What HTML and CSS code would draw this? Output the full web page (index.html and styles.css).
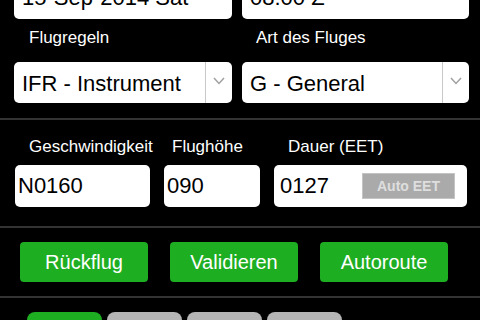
FILE: index.html
```html
<!DOCTYPE html>
<html>
  <head>
    <title>Flugplan</title>
    <meta charset="utf-8" />
    <meta name="viewport" content="width=device-width" />
    <link rel="stylesheet" href="styles.css">
  </head>

  <body>
    <div id="page">
      <div class="section" id="general_section">
        <div class="field_grid">
          <input class="text_input top_input" type="text" value="15-Sep-2014 Sat" />
          <input class="text_input top_input" type="text" value="08:00 Z" />

          <div class="field_label">Flugregeln</div>
          <div class="field_label">Art des Fluges</div>

          <div class="select_box">
            <span class="select_text">IFR - Instrument</span>
            <span class="select_arrow">
              <svg width="12" height="8" viewBox="0 0 12 8">
                <path d="M1 1 L6 6.5 L11 1" fill="none" stroke="#a0a0a0" stroke-width="1.5" />
              </svg>
            </span>
          </div>
          <div class="select_box">
            <span class="select_text">G - General</span>
            <span class="select_arrow">
              <svg width="12" height="8" viewBox="0 0 12 8">
                <path d="M1 1 L6 6.5 L11 1" fill="none" stroke="#a0a0a0" stroke-width="1.5" />
              </svg>
            </span>
          </div>
        </div>
      </div>

      <div class="section" id="speed_section">
        <div class="speed_grid">
          <div class="field_label" id="speed_label">Geschwindigkeit</div>
          <div class="field_label" id="level_label">Flughöhe</div>
          <div class="field_label" id="eet_label">Dauer (EET)</div>

          <input class="text_input small_input" id="speed_input" type="text" value="N0160" />
          <input class="text_input small_input" id="level_input" type="text" value="090" />
          <div class="eet_box">
            <span class="eet_value">0127</span>
            <input class="auto_button" type="button" value="Auto EET" />
          </div>
        </div>
      </div>

      <div class="section" id="action_section">
        <input class="button" type="button" value="Rückflug" />
        <input class="button" type="button" value="Validieren" />
        <input class="button" type="button" value="Autoroute" />
      </div>

      <div class="section" id="tab_section">
        <div class="tab tab_active"></div>
        <div class="tab"></div>
        <div class="tab"></div>
        <div class="tab"></div>
      </div>
    </div>
  </body>
</html>
```

FILE: styles.css
```css
* {
  margin: 0;
  padding: 0;
}

input {
  margin: 0;
  padding: 0;
  appearance: none;
  -webkit-appearance: none;
  -moz-appearance: none;
}

html,
body {
  background-color: black;
  overflow: hidden;
}

body {
  color: white;
  font-family: "Liberation Sans", Arial, Helvetica, sans-serif;
  font-size: 17px;
}

#page {
  margin-top: -23px;
}

.section {
  border-top: 2px solid #333333;
}

#general_section {
  border-top: none;
  padding-left: 14px;
  padding-bottom: 15px;
}

.field_grid {
  display: grid;
  grid-template-columns: 218px 227px;
  column-gap: 10px;
}

.field_label {
  font-size: 17px;
  line-height: 20px;
  padding-left: 15px;
  white-space: nowrap;
}

.field_grid .field_label {
  margin-top: 9px;
  margin-bottom: 14px;
}

.field_grid .field_label:nth-child(4) {
  padding-left: 14px;
}

.text_input {
  background-color: white;
  box-sizing: border-box;
  height: 42px;
  width: 100%;
  border-radius: 5px;
  padding-left: 8px;
  color: black;
  font-family: "Liberation Sans", Arial, Helvetica, sans-serif;
  font-size: 22px;
  border: none;
  outline: none;
}

.select_box {
  display: flex;
  background-color: white;
  height: 41px;
  border-radius: 5px;
  color: black;
  font-size: 22px;
}

.select_text {
  flex: 1;
  padding-left: 8px;
  padding-top: 2px;
  line-height: 39px;
  white-space: nowrap;
}

.select_arrow {
  width: 27px;
  border-left: 1px solid #c8c8c8;
  display: flex;
  justify-content: center;
  padding-top: 15px;
  box-sizing: border-box;
}

#speed_section {
  padding-top: 17px;
  padding-bottom: 19px;
  padding-left: 15px;
}

.speed_grid {
  display: grid;
  grid-template-columns: 135px 96px 193px;
  column-gap: 14px;
  row-gap: 8px;
}

#speed_label {
  padding-left: 14px;
}

#level_label {
  padding-left: 8px;
}

#eet_label {
  padding-left: 14px;
}

.small_input {
  padding-left: 3px;
}

.eet_box {
  display: flex;
  align-items: center;
  justify-content: space-between;
  background-color: white;
  height: 42px;
  border-radius: 5px;
  padding-left: 6px;
  padding-right: 12px;
  color: black;
  font-size: 22px;
}

.auto_button {
  background-color: #aaaaaa;
  border: 1px solid #c4c4c4;
  width: 93px;
  height: 26px;
  color: #dedede;
  font-family: "Liberation Sans", Arial, Helvetica, sans-serif;
  font-size: 14px;
  font-weight: bold;
}

#action_section {
  display: flex;
  gap: 22px;
  padding: 14px 0 14px 20px;
}

.button {
  background-color: #1eae22;
  height: 40px;
  width: 128px;
  border-radius: 4px;
  color: white;
  font-family: "Liberation Sans", Arial, Helvetica, sans-serif;
  font-size: 20px;
  border: none;
  outline: none;
}

#tab_section {
  display: flex;
  gap: 5px;
  padding-top: 14px;
  padding-left: 27px;
}

.tab {
  background-color: #b5b5b5;
  width: 75px;
  height: 36px;
  border-radius: 8px 8px 0 0;
}

.tab_active {
  background-color: #1eae22;
}
```
